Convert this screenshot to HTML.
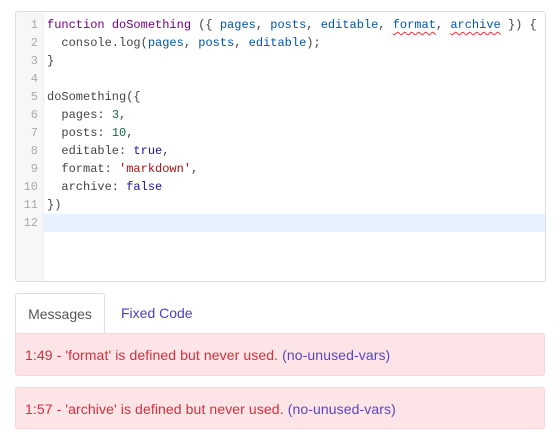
<!DOCTYPE html>
<html><head><style>
body{margin:0;background:#fff;width:560px;height:435px;overflow:hidden;position:relative;font-family:"Liberation Sans",sans-serif}
.ed{position:absolute;left:15px;top:11px;width:529px;height:269px;border:1px solid #ddd;border-radius:3px;background:#fff;overflow:hidden}
.gut{position:absolute;left:0;top:0;width:27px;height:100%;background:#f7f7f7;border-right:1px solid #eee}
.code{position:absolute;left:0;top:4px;width:100%;font-family:"Liberation Mono",monospace;font-size:12px}
.l{height:18px;line-height:18px;position:relative;white-space:pre;color:#444}
.n{position:absolute;left:0;width:22px;text-align:right;color:#aaa}
.t{position:absolute;left:31px}
.act{background:#e8f2ff;margin-left:28px}
.act .n{left:-28px}
.k{color:#708}.d{color:#708;font-weight:normal}.v{color:#05a}.num{color:#164}.s{color:#a11}.a{color:#219}
.u{text-decoration:underline wavy #e33;text-decoration-thickness:1px;text-underline-offset:3px}
.tab{position:absolute;top:293px;height:40px;line-height:40px;font-size:14px}
.t1{left:15px;width:88px;border:1px solid #ddd;border-bottom:none;border-radius:3px 3px 0 0;text-align:center;color:#555;background:#fff}
.t2{left:121px;color:#4a3fc0}
.al{position:absolute;left:15px;width:530px;background:#fde4e6;border:1px solid #f8d6da;border-radius:3px;color:#d32f3e;font-size:14px;padding-left:9px;box-sizing:border-box;letter-spacing:0.1px}
.al span{color:#5646c0}
</style></head><body>
<div class="ed"><div class="gut"></div>
<div class="code">
<div class="l"><span class="n">1</span><span class="t"><span class="k">function</span> <span class="d">doSomething</span> ({ <span class="v">pages</span>, <span class="v">posts</span>, <span class="v">editable</span>, <span class="v u">format</span>, <span class="v u">archive</span> }) {</span></div>
<div class="l"><span class="n">2</span><span class="t">  console.log(<span class="v">pages</span>, <span class="v">posts</span>, <span class="v">editable</span>);</span></div>
<div class="l"><span class="n">3</span><span class="t">}</span></div>
<div class="l"><span class="n">4</span><span class="t"></span></div>
<div class="l"><span class="n">5</span><span class="t">doSomething({</span></div>
<div class="l"><span class="n">6</span><span class="t">  pages: <span class="num">3</span>,</span></div>
<div class="l"><span class="n">7</span><span class="t">  posts: <span class="num">10</span>,</span></div>
<div class="l"><span class="n">8</span><span class="t">  editable: <span class="a">true</span>,</span></div>
<div class="l"><span class="n">9</span><span class="t">  format: <span class="s">'markdown'</span>,</span></div>
<div class="l"><span class="n">10</span><span class="t">  archive: <span class="a">false</span></span></div>
<div class="l"><span class="n">11</span><span class="t">})</span></div>
<div class="l act"><span class="n">12</span></div>
</div></div>
<div class="tab t1">Messages</div>
<div class="tab t2">Fixed Code</div>
<div class="al" style="top:333px;height:43px;line-height:42px">1:49 - 'format' is defined but never used. <span>(no-unused-vars)</span></div>
<div class="al" style="top:387px;height:42px;line-height:42px">1:57 - 'archive' is defined but never used. <span>(no-unused-vars)</span></div>
</body></html>
